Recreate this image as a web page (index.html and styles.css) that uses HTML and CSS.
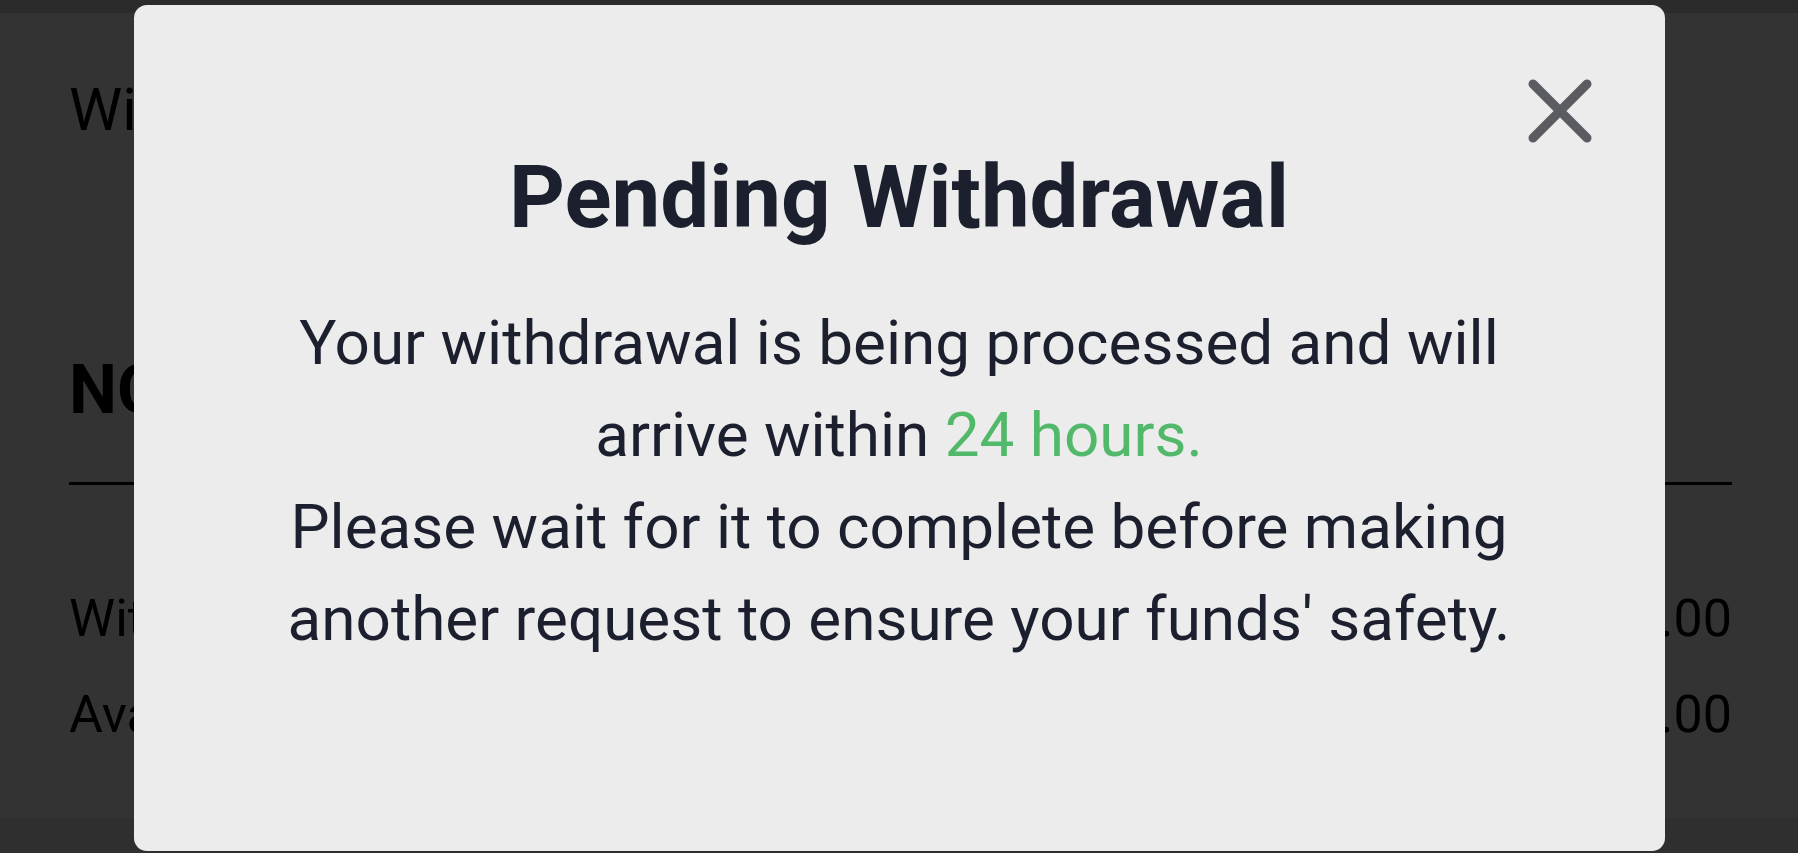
FILE: index.html
```html
<!DOCTYPE html>
<html lang="en">
<head>
<meta charset="utf-8">
<title>Withdraw</title>
<link rel="stylesheet" href="styles.css">
</head>
<body>
  <div class="page">
    <div class="status-bar"></div>
    <main class="content">
      <h1 class="page-title">Withdraw</h1>
      <h2 class="section-title">NOTE</h2>
      <hr class="divider">
      <div class="summary-row">
        <span>Withdrawal amount</span>
        <span>₱0.00</span>
      </div>
      <div class="summary-row">
        <span>Available balance</span>
        <span>₱0.00</span>
      </div>
    </main>
    <div class="bottom-bar"></div>
  </div>

  <div class="overlay">
    <div class="dialog" role="dialog" aria-labelledby="dialog-title">
      <button class="dialog-close" aria-label="Close">
        <svg viewBox="0 0 66 66" width="66" height="66" aria-hidden="true">
          <path d="M6 6 L60 60 M60 6 L6 60" stroke="#5b5c61" stroke-width="9" stroke-linecap="round" fill="none"/>
        </svg>
      </button>
      <h2 class="dialog-title" id="dialog-title">Pending Withdrawal</h2>
      <p class="dialog-text">Your withdrawal is being processed and will<br>arrive within <span class="highlight">24 hours.</span><br>Please wait for it to complete before making<br>another request to ensure your funds' safety.</p>
    </div>
  </div>
</body>
</html>
```

FILE: styles.css
```css
* {
  box-sizing: border-box;
}

html, body {
  margin: 0;
  padding: 0;
  height: 100%;
  overflow: hidden;
}

body {
  font-family: Roboto, "Liberation Sans", Arial, sans-serif;
  background: #ffffff;
  color: #000000;
}

.page {
  height: 100%;
  display: flex;
  flex-direction: column;
}

.status-bar {
  height: 13px;
  background: #d7d7d7;
  flex: none;
}

.content {
  flex: 1;
  padding: 0 66px 0 69px;
  display: flex;
  flex-direction: column;
}

.page-title {
  margin: 61px 0 0;
  font-size: 60px;
  line-height: 72px;
  font-weight: 400;
}

.section-title {
  margin: 204px 0 0;
  font-size: 68px;
  line-height: 80px;
  font-weight: 700;
}

.divider {
  margin: 52px 0 0;
  border: 0;
  height: 3px;
  background: #000000;
}

.summary-row {
  display: flex;
  justify-content: space-between;
  font-size: 52px;
  line-height: 62px;
  margin-top: 34px;
}

.summary-row:first-of-type {
  margin-top: 103px;
}

.bottom-bar {
  height: 35px;
  background: #ececec;
  flex: none;
}

/* Modal layer */
.overlay {
  position: fixed;
  inset: 0;
  background: rgba(0, 0, 0, 0.8);
  display: flex;
  justify-content: center;
  align-items: flex-start;
  padding-top: 5px;
}

.dialog {
  position: relative;
  width: 1531px;
  height: 846px;
  background: #ececec;
  border-radius: 13px;
  padding-top: 142px;
  text-align: center;
  color: #1b1f2e;
}

.dialog-close {
  position: absolute;
  top: 73px;
  left: 1393px;
  width: 66px;
  height: 66px;
  padding: 0;
  border: 0;
  background: transparent;
  cursor: pointer;
}

.dialog-close svg {
  display: block;
}

.dialog-title {
  margin: 0;
  font-size: 87px;
  line-height: 100px;
  font-weight: 700;
}

.dialog-text {
  margin: 50px 0 0;
  font-size: 62px;
  line-height: 92px;
  font-weight: 400;
}

.highlight {
  color: #52b96b;
}
```
